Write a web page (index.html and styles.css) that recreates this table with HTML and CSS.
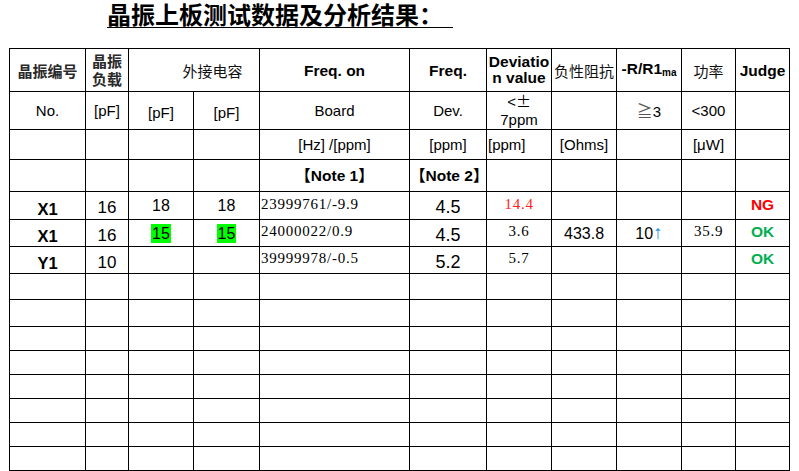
FILE: index.html
```html
<!DOCTYPE html>
<html lang="zh-CN">
<head>
<meta charset="utf-8">
<title>晶振上板测试数据及分析结果</title>
<link rel="stylesheet" href="styles.css">
</head>
<body>
<div class="title"><span class="title-text">晶振上板测试数据及分析结果：</span></div>
<table class="grid">
  <colgroup>
    <col class="w76"><col class="w43"><col class="w65"><col class="w66"><col class="w150"><col class="w77"><col class="w65"><col class="w65"><col class="w65"><col class="w54"><col class="w54">
  </colgroup>
  <tr class="r-h1">
    <td class="cjk strong">晶振编号</td>
    <td class="cjk strong tight">晶振<br>负载</td>
    <td class="cjk shift" colspan="2">外接电容</td>
    <td class="b">Freq. on</td>
    <td class="b">Freq.</td>
    <td class="b wrap">Deviation value</td>
    <td class="cjk">负性阻抗</td>
    <td class="b">-R/R1<span class="sub">ma</span></td>
    <td class="cjk">功率</td>
    <td class="b">Judge</td>
  </tr>
  <tr class="r-h2">
    <td>No.</td>
    <td>[pF]</td>
    <td class="low">[pF]</td>
    <td class="low">[pF]</td>
    <td>Board</td>
    <td>Dev.</td>
    <td class="tight2">&lt;<span class="pm">±</span><br>7ppm</td>
    <td></td>
    <td><span class="ge">≧</span>3</td>
    <td>&lt;300</td>
    <td></td>
  </tr>
  <tr class="r-h3">
    <td></td><td></td><td></td><td></td>
    <td>[Hz] /[ppm]</td>
    <td>[ppm]</td>
    <td class="left">[ppm]</td>
    <td>[Ohms]</td>
    <td></td>
    <td>[μW]</td>
    <td></td>
  </tr>
  <tr class="r-h4">
    <td></td><td></td><td></td><td></td>
    <td class="b">【Note 1】</td>
    <td class="b note2">【Note 2】</td>
    <td></td><td></td><td></td><td></td><td></td>
  </tr>
  <tr class="r-d1">
    <td class="b id">X1</td>
    <td class="num n16 low">16</td>
    <td class="num">18</td>
    <td class="num">18</td>
    <td class="serif left">23999761/-9.9</td>
    <td class="big low">4.5</td>
    <td class="serif red">14.4</td>
    <td></td>
    <td></td>
    <td></td>
    <td class="b ng">NG</td>
  </tr>
  <tr class="r-d2">
    <td class="b id">X1</td>
    <td class="num n16 low">16</td>
    <td class="num"><span class="hl">15</span></td>
    <td class="num"><span class="hl">15</span></td>
    <td class="serif left">24000022/0.9</td>
    <td class="big low">4.5</td>
    <td class="serif">3.6</td>
    <td class="num">433.8</td>
    <td class="num">10<span class="arrow">↑</span></td>
    <td class="serif">35.9</td>
    <td class="b ok">OK</td>
  </tr>
  <tr class="r-d3">
    <td class="b id">Y1</td>
    <td class="num n16 low">10</td>
    <td></td>
    <td></td>
    <td class="serif left">39999978/-0.5</td>
    <td class="big low">5.2</td>
    <td class="serif">5.7</td>
    <td></td>
    <td></td>
    <td></td>
    <td class="b ok">OK</td>
  </tr>
  <tr class="r-e26"><td></td><td></td><td></td><td></td><td></td><td></td><td></td><td></td><td></td><td></td><td></td></tr>
  <tr class="r-e27"><td></td><td></td><td></td><td></td><td></td><td></td><td></td><td></td><td></td><td></td><td></td></tr>
  <tr class="r-e24"><td></td><td></td><td></td><td></td><td></td><td></td><td></td><td></td><td></td><td></td><td></td></tr>
  <tr class="r-e24"><td></td><td></td><td></td><td></td><td></td><td></td><td></td><td></td><td></td><td></td><td></td></tr>
  <tr class="r-e24"><td></td><td></td><td></td><td></td><td></td><td></td><td></td><td></td><td></td><td></td><td></td></tr>
  <tr class="r-e24"><td></td><td></td><td></td><td></td><td></td><td></td><td></td><td></td><td></td><td></td><td></td></tr>
  <tr class="r-e24"><td></td><td></td><td></td><td></td><td></td><td></td><td></td><td></td><td></td><td></td><td></td></tr>
  <tr class="r-e24"><td></td><td></td><td></td><td></td><td></td><td></td><td></td><td></td><td></td><td></td><td></td></tr>
</table>
</body>
</html>
```

FILE: styles.css
```css
html, body {
  margin: 0;
  padding: 0;
  background: #ffffff;
}

body {
  width: 799px;
  height: 471px;
  overflow: hidden;
  color: #000;
  font-family: "Liberation Sans", "Noto Sans CJK SC", Arial, sans-serif;
}

.title {
  height: 48px;
  box-sizing: border-box;
  padding: 0 0 0 107px;
}

.title-text {
  display: inline-block;
  font-family: "Noto Sans CJK SC", sans-serif;
  font-weight: 700;
  font-size: 24px;
  line-height: 27px;
  padding-right: 10px;
  border-bottom: 1px solid #000;
}

.grid {
  border-collapse: collapse;
  table-layout: fixed;
  width: 781px;
  margin-left: 9px;
}

.grid td {
  border: 1px solid #000;
  padding: 0 1px;
  text-align: center;
  vertical-align: middle;
  font-size: 15px;
  line-height: 17px;
  white-space: nowrap;
  overflow: visible;
}

.w76 { width: 76px; }
.w43 { width: 43px; }
.w65 { width: 65px; }
.w66 { width: 66px; }
.w150 { width: 150px; }
.w77 { width: 77px; }
.w54 { width: 54px; }

.r-h1 { height: 43px; }
.r-h2 { height: 36px; }
.r-h3 { height: 30px; }
.r-h4 { height: 32px; }
.r-d1 { height: 28px; }
.r-d2 { height: 27px; }
.r-d3 { height: 27px; }
.r-e26 { height: 26px; }
.r-e27 { height: 27px; }
.r-e24 { height: 24px; }

.cjk {
  font-family: "Noto Sans CJK SC", sans-serif;
  font-size: 15px;
  color: #111;
}

.strong {
  font-weight: 700;
  color: #2a2a2a;
}

.tight {
  line-height: 18px !important;
}

.shift {
  padding-left: 38px !important;
}

.b {
  font-weight: 700;
  font-size: 15.5px !important;
}

.wrap {
  white-space: normal !important;
  word-break: break-all;
  line-height: 16px !important;
}

.sub {
  font-size: 10px;
  vertical-align: -2px;
}

.tight2 {
  line-height: 18px !important;
}

.pm {
  font-family: "Noto Sans CJK SC", sans-serif;
  font-size: 15px;
}

.ge {
  font-family: "Noto Sans CJK SC", sans-serif;
  font-size: 16px;
  color: #555;
}

.left {
  text-align: left !important;
}

.low {
  padding-top: 4px !important;
}

.note2 {
  padding: 0 !important;
}

.id {
  font-size: 16.5px !important;
  padding-top: 7px !important;
}

.num {
  font-size: 16px !important;
}

.n16 {
  font-size: 17px !important;
}

.big {
  font-size: 18px !important;
}

.serif {
  font-family: "Liberation Serif", "Noto Sans CJK SC", serif;
  font-size: 15px;
  letter-spacing: 0.75px;
  padding-bottom: 3px !important;
}

.red {
  color: #ff2020;
}

.ng {
  color: #ff0000;
  padding-bottom: 3px !important;
}

.ok {
  color: #00b050;
  padding-bottom: 3px !important;
}

.hl {
  display: inline-block;
  background: #00ff00;
  line-height: 19px;
  padding: 0 1px;
}

.arrow {
  font-family: "Liberation Sans", sans-serif;
  font-size: 19px;
  line-height: 17px;
  color: #1a8fe8;
}
```
